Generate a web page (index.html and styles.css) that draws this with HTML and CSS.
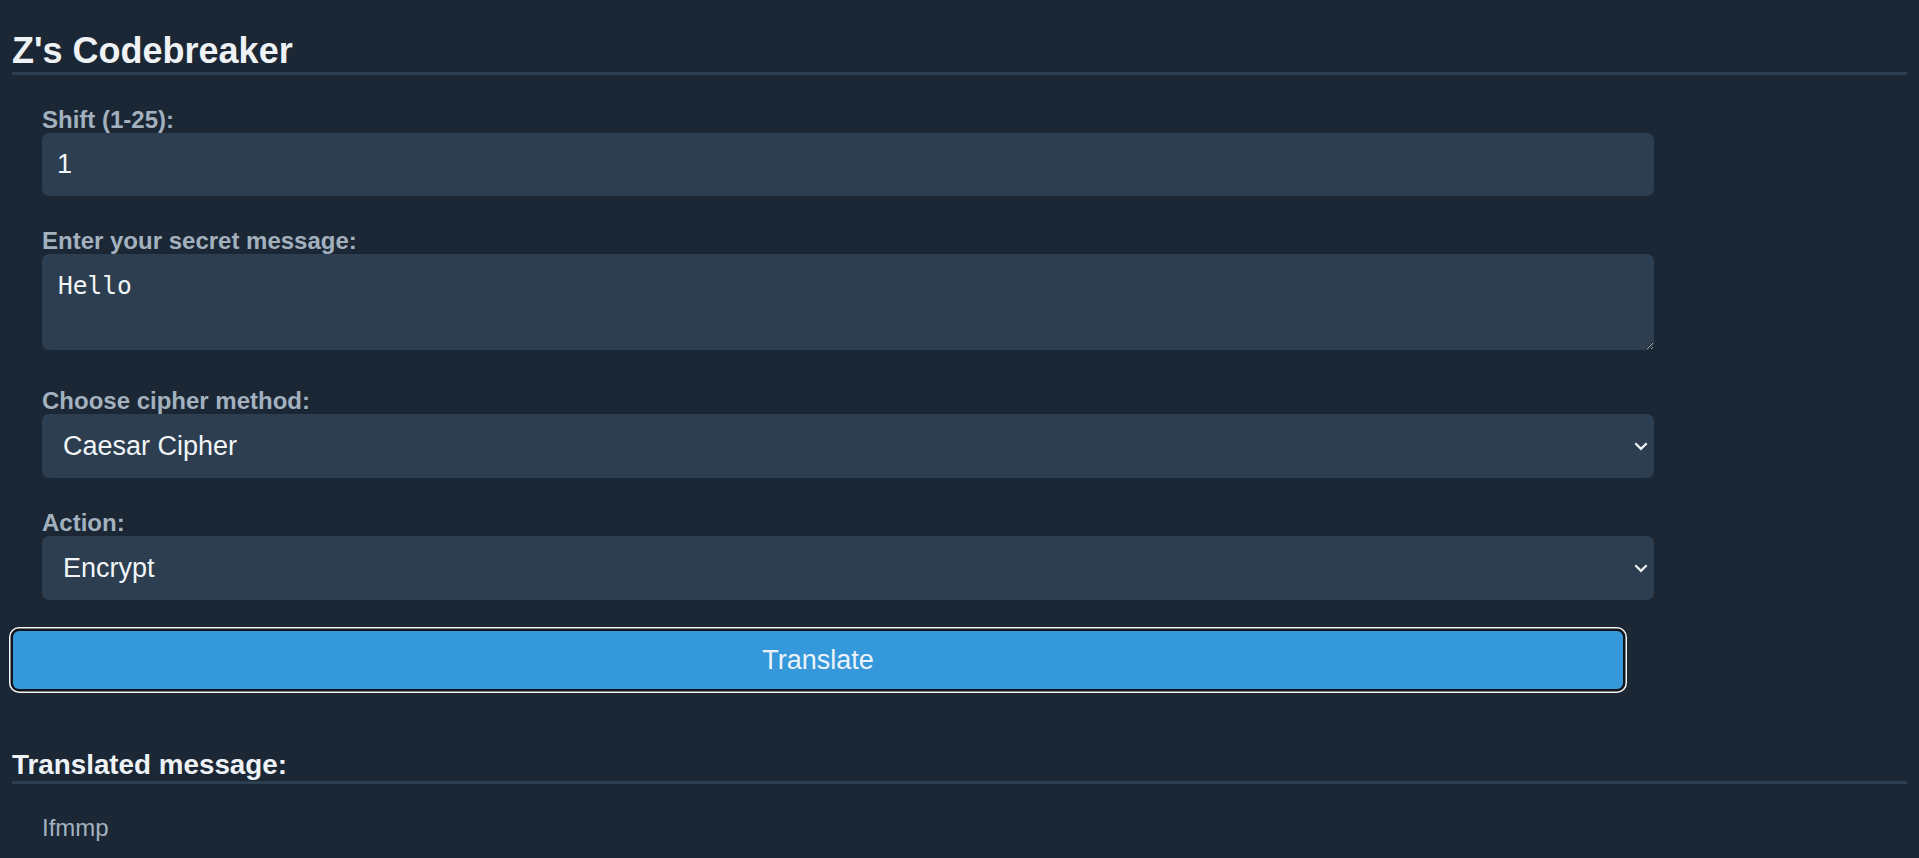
FILE: index.html
```html
<!DOCTYPE html>
<html lang="en">
<head>
<meta charset="utf-8">
<title>Z's Codebreaker</title>
<link rel="stylesheet" href="styles.css">
</head>
<body>
  <h1 class="title">Z's Codebreaker</h1>
  <form class="form">
    <div class="group">
      <label class="label" for="shift">Shift (1-25):</label>
      <input class="field field-text" id="shift" type="text" inputmode="numeric" value="1">
    </div>
    <div class="group group-text">
      <label class="label" for="msg">Enter your secret message:</label>
      <textarea class="field area" id="msg">Hello</textarea>
    </div>
    <div class="group">
      <label class="label" for="method">Choose cipher method:</label>
      <div class="select-wrap">
        <select class="field select" id="method">
          <option>Caesar Cipher</option>
        </select>
        <svg class="chev" width="14" height="9" viewBox="0 0 14 9"><path d="M1.3 1.3 L7 6.9 L12.7 1.3" fill="none" stroke="#eef2f5" stroke-width="2.3"/></svg>
      </div>
    </div>
    <div class="group">
      <label class="label" for="action">Action:</label>
      <div class="select-wrap">
        <select class="field select" id="action">
          <option>Encrypt</option>
        </select>
        <svg class="chev" width="14" height="9" viewBox="0 0 14 9"><path d="M1.3 1.3 L7 6.9 L12.7 1.3" fill="none" stroke="#eef2f5" stroke-width="2.3"/></svg>
      </div>
    </div>
  </form>
  <button class="btn btn-focus" type="button">Translate</button>
  <h2 class="subtitle">Translated message:</h2>
  <p class="result">Ifmmp</p>
</body>
</html>
```

FILE: styles.css
```css
html, body {
  margin: 0;
  background: #1b2735;
}

body {
  padding: 12px;
  font-family: "Liberation Sans", Arial, sans-serif;
  color: #ecf0f1;
}

.title {
  margin: 18px 0 0;
  font-size: 36px;
  line-height: 42px;
  font-weight: 700;
  color: #eef2f5;
  border-bottom: 3px solid #2c3e50;
}

.form {
  margin: 31px 0 0;
  padding: 0 30px;
}

.group {
  display: flex;
  flex-direction: column;
  width: 1612px;
  margin-bottom: 31px;
}

.group-text {
  margin-bottom: 37px;
}

.group:last-child {
  margin-bottom: 0;
}

.label {
  display: block;
  font-size: 24px;
  line-height: 27px;
  font-weight: 700;
  color: #a3b1bf;
}

.field {
  box-sizing: border-box;
  display: block;
  width: 100%;
  height: 63px;
  margin: 0;
  padding: 0 15px;
  border: none;
  border-radius: 7px;
  background: #2c3e50;
  color: #f2f5f7;
  font-family: "Liberation Sans", Arial, sans-serif;
  font-size: 27px;
  outline: none;
}

.field-text {
  font-family: "Liberation Sans", Arial, sans-serif;
}

.area {
  height: 96px;
  padding: 18px 16px;
  font-family: "DejaVu Sans Mono", "Liberation Mono", monospace;
  font-size: 24.5px;
  line-height: 28px;
  resize: vertical;
}

.select-wrap {
  position: relative;
}

.select {
  height: 64px;
  padding: 0 40px 0 21px;
  -webkit-appearance: none;
  appearance: none;
}

.chev {
  position: absolute;
  right: 6px;
  top: 28px;
  pointer-events: none;
}

.btn {
  display: block;
  box-sizing: border-box;
  width: 1610px;
  height: 58px;
  margin: 31px 0 0 1px;
  padding: 0;
  border: none;
  border-radius: 6px;
  background: #3498db;
  color: #ecf3f8;
  font-family: "Liberation Sans", Arial, sans-serif;
  font-size: 27px;
  cursor: pointer;
}

.btn-focus {
  box-shadow: 0 0 0 2.5px #111418, 0 0 0 4px #f4f6f8;
}

.subtitle {
  margin: 60px 0 0;
  font-size: 27.8px;
  line-height: 32px;
  font-weight: 700;
  color: #eef2f5;
  border-bottom: 3px solid #2c3e50;
}

.result {
  margin: 30px 0 0;
  padding-left: 30px;
  font-size: 24px;
  line-height: 27px;
  color: #a3b1bf;
}
```
